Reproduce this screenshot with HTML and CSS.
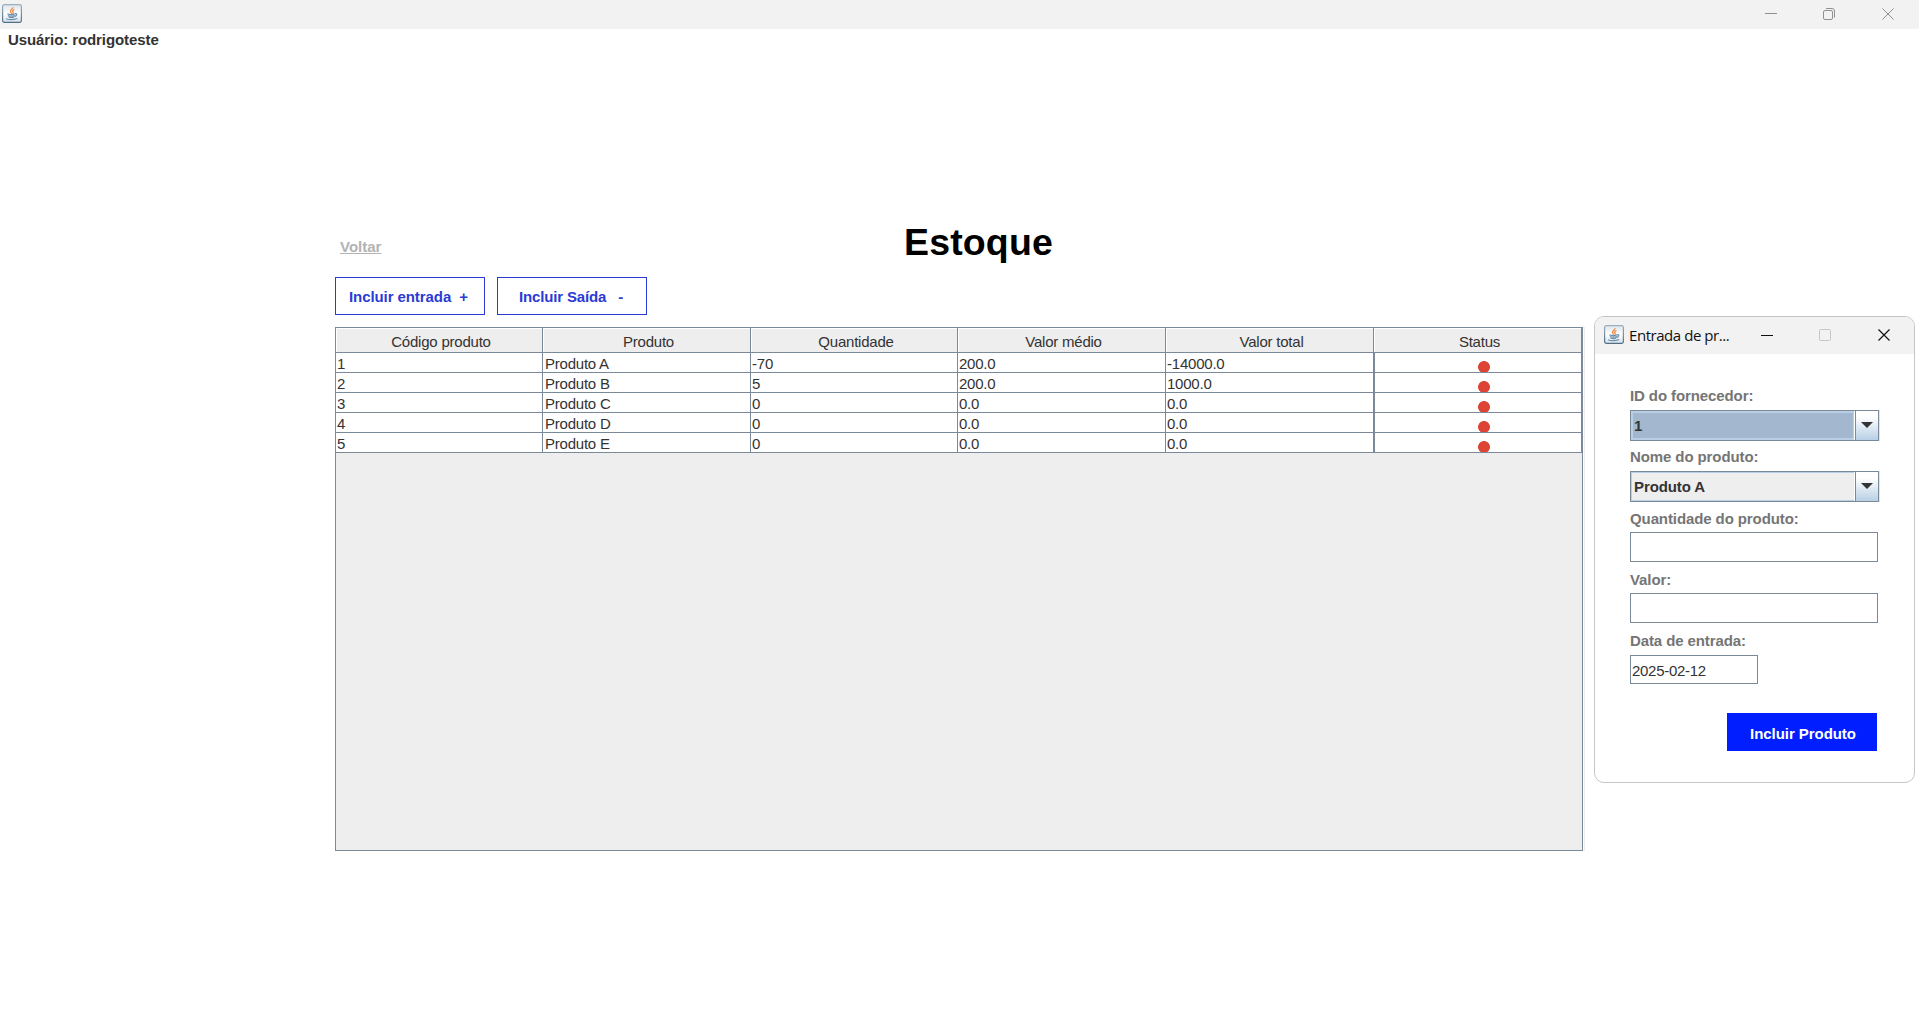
FILE: index.html
```html
<!DOCTYPE html>
<html lang="pt-BR">
<head>
<meta charset="utf-8">
<title>Estoque</title>
<link rel="stylesheet" href="styles.css">
</head>
<body>
<svg class="defs" width="0" height="0" aria-hidden="true">
  <defs>
    <linearGradient id="tile" x1="0" y1="0" x2="0" y2="1">
      <stop offset="0" stop-color="#dce4ea"/><stop offset=".5" stop-color="#ffffff"/><stop offset="1" stop-color="#d5dfe7"/>
    </linearGradient>
    <linearGradient id="edge" x1="0" y1="0" x2="0" y2="1">
      <stop offset="0" stop-color="#9db0bf"/><stop offset="1" stop-color="#4f6e87"/>
    </linearGradient>
    <symbol id="java" viewBox="0 0 20 19">
      <rect x=".6" y=".6" width="18.8" height="17.8" rx="1.8" fill="url(#tile)" stroke="url(#edge)" stroke-width="1.2"/>
      <path d="M11 3.2c.5 1.700-2.700 2.500-2.500 4.200.1.900 1 1.400 1.100 2.400M12.400 5.700c-1.700.7-2.200 1.500-1.400 2.500.4.600.2 1.200-.3 1.700" fill="none" stroke="#ec8a45" stroke-width="1.300"/>
      <path d="M5.400 9.900q4 1.300 7.800 0M5.900 11.600q3.500 1.100 6.900 0M6.600 13.200q2.800.9 5.500 0M13 9.700c2.700-.5 2.200 2.100-.5 2.900M4 14.700q5 2 11.300-.2" fill="none" stroke="#6f93ae" stroke-width="1.200"/>
    </symbol>
  </defs>
</svg>

<header class="titlebar">
  <svg class="app-icon" width="20" height="19"><use href="#java"/></svg>
  <svg class="controls" width="130" height="12" fill="none" stroke="#909090">
    <path d="M0 5.500h12"/>
    <rect x="58.500" y="2.500" width="9" height="9" rx="1.500"/>
    <path d="M61 .5h6a2.500 2.500 0 0 1 2.500 2.500v6.500"/>
    <path d="M117.500.5l11 11M128.500.5l-11 11"/>
  </svg>
</header>
<p class="user">Usuário: rodrigoteste</p>

<main class="stock">
  <div class="heading">
    <a class="back">Voltar</a>
    <h1 class="title">Estoque</h1>
  </div>
  <div class="actions">
    <button class="btn btn-in">Incluir entrada&nbsp; +</button>
    <button class="btn btn-out">Incluir Saída&nbsp;&nbsp; -</button>
  </div>
  <div class="panel">
    <table class="grid">
      <colgroup><col class="narrow"><col class="wide"><col class="narrow"><col class="wide"><col class="wide"><col class="wide"></colgroup>
      <thead>
        <tr><th>Código produto</th><th>Produto</th><th>Quantidade</th><th>Valor médio</th><th>Valor total</th><th>Status</th></tr>
      </thead>
      <tbody>
        <tr><td>1</td><td>Produto A</td><td>-70</td><td>200.0</td><td>-14000.0</td><td class="status"><i class="dot"></i></td></tr>
        <tr><td>2</td><td>Produto B</td><td>5</td><td>200.0</td><td>1000.0</td><td class="status"><i class="dot"></i></td></tr>
        <tr><td>3</td><td>Produto C</td><td>0</td><td>0.0</td><td>0.0</td><td class="status"><i class="dot"></i></td></tr>
        <tr><td>4</td><td>Produto D</td><td>0</td><td>0.0</td><td>0.0</td><td class="status"><i class="dot"></i></td></tr>
        <tr><td>5</td><td>Produto E</td><td>0</td><td>0.0</td><td>0.0</td><td class="status"><i class="dot"></i></td></tr>
      </tbody>
    </table>
  </div>
</main>

<section class="dialog">
  <header class="dialog-bar">
    <svg width="20" height="19"><use href="#java"/></svg>
    <span class="dialog-title">Entrada de pr...</span>
    <svg class="dialog-controls" width="130" height="12" fill="none" stroke="#111">
      <path d="M0 6.500h12"/>
      <rect x="58.500" y=".5" width="11" height="11" rx="1" stroke="#c6c6c6"/>
      <path d="M117.500.5l11 11M128.500.5l-11 11" stroke-width="1.200"/>
    </svg>
  </header>
  <form class="form">
    <label class="label">ID do fornecedor:</label>
    <div class="combo combo-focus"><span class="combo-value">1</span><span class="combo-arrow"><svg width="12" height="6"><path d="M0 0h12L6 6z" fill="#333"/></svg></span></div>
    <label class="label">Nome do produto:</label>
    <div class="combo"><span class="combo-value">Produto A</span><span class="combo-arrow"><svg width="12" height="6"><path d="M0 0h12L6 6z" fill="#333"/></svg></span></div>
    <label class="label label-qty">Quantidade do produto:</label>
    <div class="field"></div>
    <label class="label label-value">Valor:</label>
    <div class="field"></div>
    <label class="label label-date">Data de entrada:</label>
    <div class="field field-date">2025-02-12</div>
    <button type="button" class="submit">Incluir Produto</button>
  </form>
</section>
</body>
</html>
```
FILE: styles.css
```css
* { box-sizing: border-box; }
body {
  margin: 0;
  height: 1016px;
  overflow: hidden;
  background: #fff;
  color: #333;
  font: 15px/17px "Liberation Sans", Arial, sans-serif;
}
.defs { position: absolute; }
svg { display: block; flex: none; }
button { font: inherit; font-weight: bold; padding: 0; white-space: nowrap; }

.titlebar {
  display: flex;
  justify-content: space-between;
  height: 29px;
  padding: 4px 24px 0 2px;
  background: #f2f2f2;
}
.controls { margin-top: 4px; }
.user { margin: 2px 0 0 8px; font-weight: bold; letter-spacing: -.09px; }

.stock { width: 1248px; margin: 170px 0 0 335px; }
.heading { display: flex; height: 59px; }
.back {
  width: 569px;
  padding: 20px 0 0 5px;
  color: #b3b3b3;
  font-weight: bold;
  text-decoration: underline;
}
.title { margin: 3px 0 0; color: #000; font-size: 37.5px; line-height: 42px; letter-spacing: .15px; }
.actions { display: flex; gap: 12px; }
.btn {
  width: 150px;
  height: 38px;
  border: 1px solid #2b3bd5;
  background: #fff;
  color: #2b3bd5;
}
.btn-in { padding-right: 3px; letter-spacing: -.08px; }
.btn-out { padding-right: 2px; letter-spacing: -.15px; }
.panel {
  height: 524px;
  margin-top: 12px;
  border: 1px solid #7a8a99;
  background: #eee;
  box-shadow: 2px 0 0 -1px #fff, 2px 0 #eee;
}
.grid {
  width: 1246px;
  table-layout: fixed;
  border-collapse: separate;
  border-spacing: 0;
  letter-spacing: -.22px;
}
.narrow { width: 207px; }
.wide { width: 208px; }
.grid th {
  height: 25px;
  padding: 3px 0 0 4px;
  border-right: 1px solid #7a8a99;
  border-bottom: 1px solid #7a8a99;
  box-shadow: inset 1px 1px #fff;
  font-weight: normal;
}
.grid td {
  height: 20px;
  padding: 2px 0 0 1px;
  border-right: 1px solid #7a8a99;
  border-bottom: 1px solid #7a8a99;
  background: #fff;
  line-height: 17px;
}
.grid td:nth-child(2) { padding-left: 2px; }
.grid .status {
  padding: 8px 0 0 103px;
  border-left: 1px solid #7a8a99;
  line-height: 0;
}
.dot {
  display: block;
  width: 12px;
  height: 11px;
  background: radial-gradient(circle at 6px 6px, #dd4436 5.600px, transparent 6.200px);
}

.dialog {
  position: absolute;
  left: 1594px;
  top: 316px;
  width: 321px;
  height: 467px;
  border: 1px solid #c6c6c6;
  border-radius: 10px;
  background: #fff;
  overflow: hidden;
}
.dialog-bar {
  display: flex;
  height: 37px;
  padding: 8px 0 0 9px;
  background: #f2f2f2;
  color: #111;
}
.dialog-title {
  width: 132px;
  margin-left: 5px;
  font: 15px/20px "Open Sans", "Noto Sans", sans-serif;
  letter-spacing: -.45px;
}
.dialog-controls { margin-top: 4px; }
.form { display: flex; flex-direction: column; width: 249px; margin: 33px 0 0 35px; }
.label { margin-bottom: 6px; color: #757575; font-weight: bold; letter-spacing: -.1px; }
.combo {
  display: flex;
  height: 31px;
  margin-bottom: 7px;
  border: 1px solid #7a8a99;
  box-shadow: 1px 0 #dce7f2;
  font-weight: bold;
  letter-spacing: -.1px;
}
.combo-value {
  flex: 1;
  padding: 5px 0 0 2px;
  border: 1px solid #b8cfe5;
  background: #eee;
}
.combo-focus .combo-value { background: #a3b8cf; box-shadow: inset 0 0 0 1px #b8cfe5; }
.combo-arrow {
  width: 23px;
  padding: 11px 0 0 5px;
  border-left: 1px solid #7a8a99;
  background: linear-gradient(#fff, #fff 20%, #b8cfe5);
  box-shadow: -1px 0 #fff;
}
.label-qty { margin-top: 1px; margin-bottom: 5px; }
.field {
  width: 248px;
  height: 30px;
  border: 1px solid #7a8a99;
  color: #333;
}
.label-value, .label-date { margin-top: 9px; }
.label-value { margin-bottom: 5px; }
.field-date { width: 128px; height: 29px; padding: 6px 0 0 1px; letter-spacing: -.28px; }
.submit {
  align-self: flex-end;
  width: 150px;
  height: 38px;
  margin: 29px 2px 0 0;
  padding: 2px 0 0 2px;
  border: 0;
  background: #001eff;
  color: #fff;
  letter-spacing: -.06px;
}
```
